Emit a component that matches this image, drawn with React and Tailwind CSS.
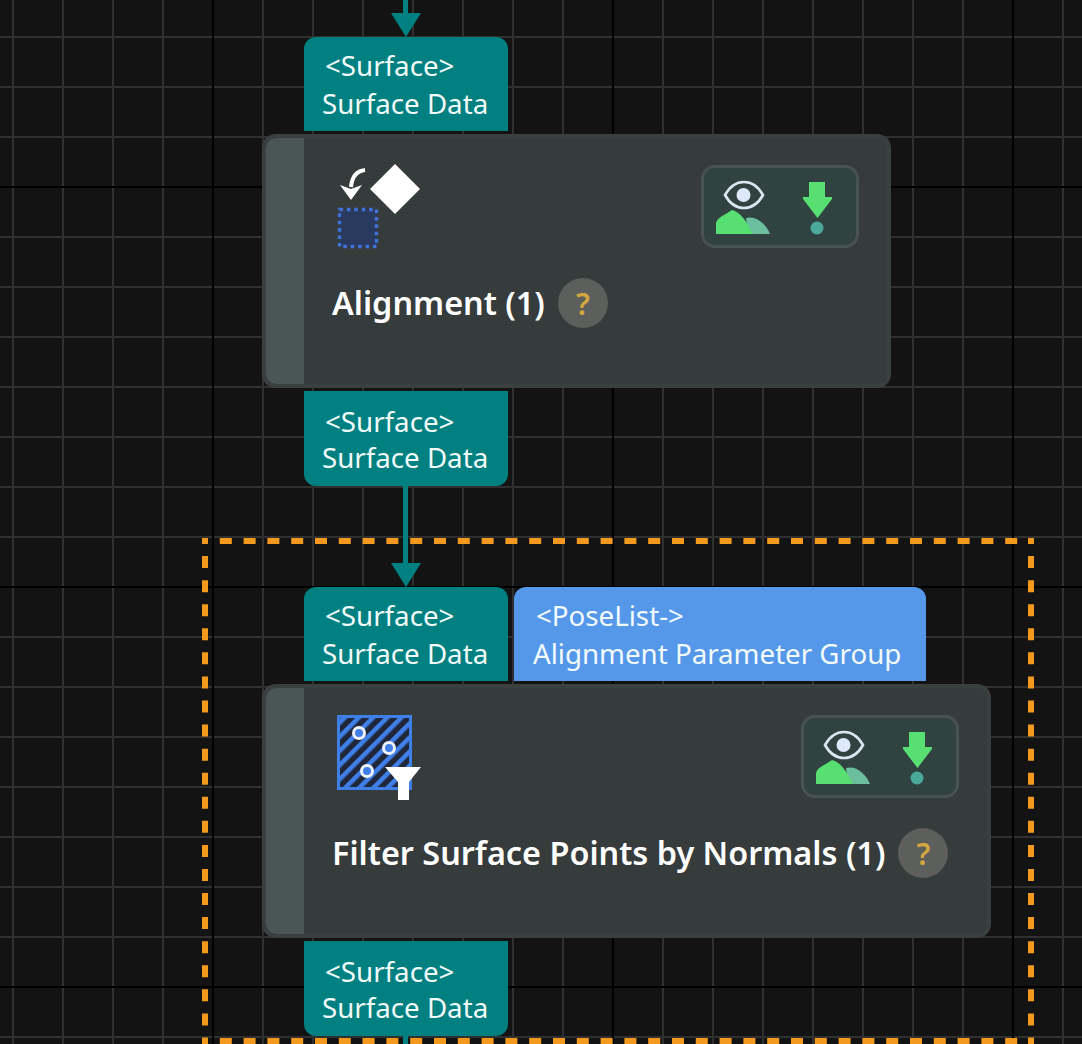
const TEAL = "#008080";

function Connector({ h, arrow }) {
  return (
    <svg className="ml-[42px] block" width="204" height={h} viewBox={`0 0 204 ${h}`}>
      <rect x="99" y="0" width="5" height={arrow ? h - 22 : h} fill={TEAL} />
      {arrow && <polygon points={`87,${h - 24} 117,${h - 24} 102,${h}`} fill={TEAL} />}
    </svg>
  );
}

function Port({ top, line1 = "<Surface>", line2 = "Surface Data", firstPt, blue }) {
  return (
    <div
      className={`${blue ? "bg-[#5597e9] w-[412px] pl-[19px]" : "bg-[#008080] w-[204px] pl-[18px]"} ${
        top ? "rounded-t-[12px] h-[94px]" : "rounded-b-[12px] h-[95px]"
      } text-[#f2fbfb] text-[27.7px] leading-[38px] whitespace-nowrap`}
      style={{ paddingTop: firstPt }}
    >
      <div className={top ? "pl-[3px]" : "pl-[3px] h-[36px] leading-[36px]"}>{line1}</div>
      <div className={top ? "" : "h-[36px] leading-[36px]"}>{line2}</div>
    </div>
  );
}

function EyeStatus() {
  return (
    <div className="mt-[27px] mr-[28px] w-[158px] h-[83px] rounded-[14px] bg-[#314341] border-[3px] border-[#475251] shrink-0">
      <svg width="152" height="77" viewBox="0 0 152 77" className="block">
        <path d="M21 27 C26 18 33 14 40 14 C47 14 54 18 59 27 C54 36 47 40 40 40 C33 40 26 36 21 27 Z" fill="none" stroke="#dce6f2" strokeWidth="2.6" />
        <circle cx="39.5" cy="27" r="7" fill="#dde8fb" />
        <path d="M42 50 C52 47 62 56 66 66 L44 66 Z" fill="#6bbf9f" />
        <path d="M12 66 L12 56 C12 52 16 49 20 47 L28 42 C36 44 41 52 44 57 L49 66 Z" fill="#58df72" />
        <path d="M105 14 L121 14 L121 29 L128 29 L128 31 L113.5 50 L99 31 L99 29 L105 29 Z" fill="#58df72" />
        <circle cx="113" cy="60" r="6.5" fill="#4aa99b" />
      </svg>
    </div>
  );
}

function Title({ text }) {
  return (
    <div className="mt-[26px] flex items-center gap-[12px] h-[50px]">
      <span className="text-white font-semibold text-[32.4px] whitespace-nowrap relative -top-[1px] -left-[1px]">{text}</span>
      <span className="w-[50px] h-[50px] rounded-full bg-[#5c5f5c] text-[#d3a640] font-semibold text-[30px] flex items-center justify-center shrink-0">?</span>
    </div>
  );
}

function Card({ icon, title, width }) {
  return (
    <div className={`${width} h-[254px] rounded-[14px] bg-[#363b3b] border-[4px] border-[#3a3f3f] flex overflow-hidden`}>
      <div className="w-[38px] bg-[#4a5655] rounded-l-[10px] shrink-0" />
      <div className="flex-1 min-w-0 flex">
        <div className="flex-1 min-w-0 pl-[29px] pt-[24px]">
          {icon}
          <Title text={title} />
        </div>
        <EyeStatus />
      </div>
    </div>
  );
}

function AlignIcon() {
  return (
    <svg width="90" height="90" viewBox="0 0 90 90" className="block">
      <path d="M32 8 C24 9 19 14 18 25" fill="none" stroke="#fff" strokeWidth="4" />
      <polygon points="7,23 18,27 29,23 18,38" fill="#fff" />
      <polygon points="62,2 87,27 62,52 37,27" fill="#fff" />
      <rect x="6.5" y="47.5" width="37" height="37" fill="#2a3a5e" stroke="#3f72d8" strokeWidth="3.5" strokeDasharray="3.6 3.8" />
    </svg>
  );
}

function FilterIcon() {
  return (
    <svg width="90" height="90" viewBox="0 0 90 90" className="block">
      <defs>
        <pattern id="hatch" width="10" height="10" patternUnits="userSpaceOnUse" patternTransform="rotate(45)">
          <rect width="10" height="10" fill="#20273a" />
          <rect width="4.5" height="10" fill="#3f7fe8" />
        </pattern>
      </defs>
      <rect x="5.5" y="4.5" width="72" height="72" fill="url(#hatch)" stroke="#3f7fe8" strokeWidth="3" />
      <circle cx="26" cy="21" r="5.5" fill="#3f7fe8" stroke="#eef2fb" strokeWidth="3" />
      <circle cx="56" cy="36" r="5.5" fill="#3f7fe8" stroke="#eef2fb" strokeWidth="3" />
      <circle cx="34" cy="59" r="5.5" fill="#3f7fe8" stroke="#eef2fb" strokeWidth="3" />
      <path d="M52 55 L88 55 L76 70 L76 88 L65 88 L65 70 Z" fill="#fff" />
    </svg>
  );
}

export default function App() {
  return (
    <div
      className="relative w-[1082px] h-[1044px] overflow-hidden bg-[#131313] [font-family:'Noto_Sans','Open_Sans',sans-serif] [background-image:linear-gradient(to_right,#000_2px,transparent_2px),linear-gradient(to_bottom,#000_2px,transparent_2px),linear-gradient(to_right,#303030_2px,transparent_2px),linear-gradient(to_bottom,#303030_2px,transparent_2px)] [background-size:400px_100%,100%_400px,50px_100%,100%_50px] [background-position:212px_0,0_186px,12px_0,0_36px]"
    >
      <svg className="absolute inset-0" width="1082" height="1044" fill="none" stroke="#f39a1e" strokeWidth="6">
        <line x1="202" y1="541" x2="1034" y2="541" strokeDasharray="12 11.8" strokeDashoffset="6" />
        <line x1="202" y1="1041" x2="1034" y2="1041" strokeDasharray="12 11.8" strokeDashoffset="6" />
        <line x1="205" y1="538" x2="205" y2="1044" strokeDasharray="12 12.07" strokeDashoffset="6" />
        <line x1="1031" y1="538" x2="1031" y2="1044" strokeDasharray="12 12.07" strokeDashoffset="6" />
      </svg>

      <div className="absolute left-[262px] top-0 flex flex-col">
        <Connector h={37} arrow />
        <div className="ml-[42px]"><Port top firstPt={9} /></div>
        <div className="mt-[3px]"><Card width="w-[629px]" icon={<AlignIcon />} title="Alignment (1)" /></div>
        <div className="ml-[42px] mt-[3px]"><Port firstPt={12} /></div>
        <Connector h={101} arrow />
        <div className="ml-[42px] flex gap-[6px]">
          <Port top firstPt={9} />
          <Port top blue firstPt={9} line1="<PoseList->" line2="Alignment Parameter Group" />
        </div>
        <div className="mt-[3px]"><Card width="w-[729px]" icon={<FilterIcon />} title="Filter Surface Points by Normals (1)" /></div>
        <div className="ml-[42px] mt-[3px]"><Port firstPt={12} /></div>
        <Connector h={8} />
      </div>
    </div>
  );
}
